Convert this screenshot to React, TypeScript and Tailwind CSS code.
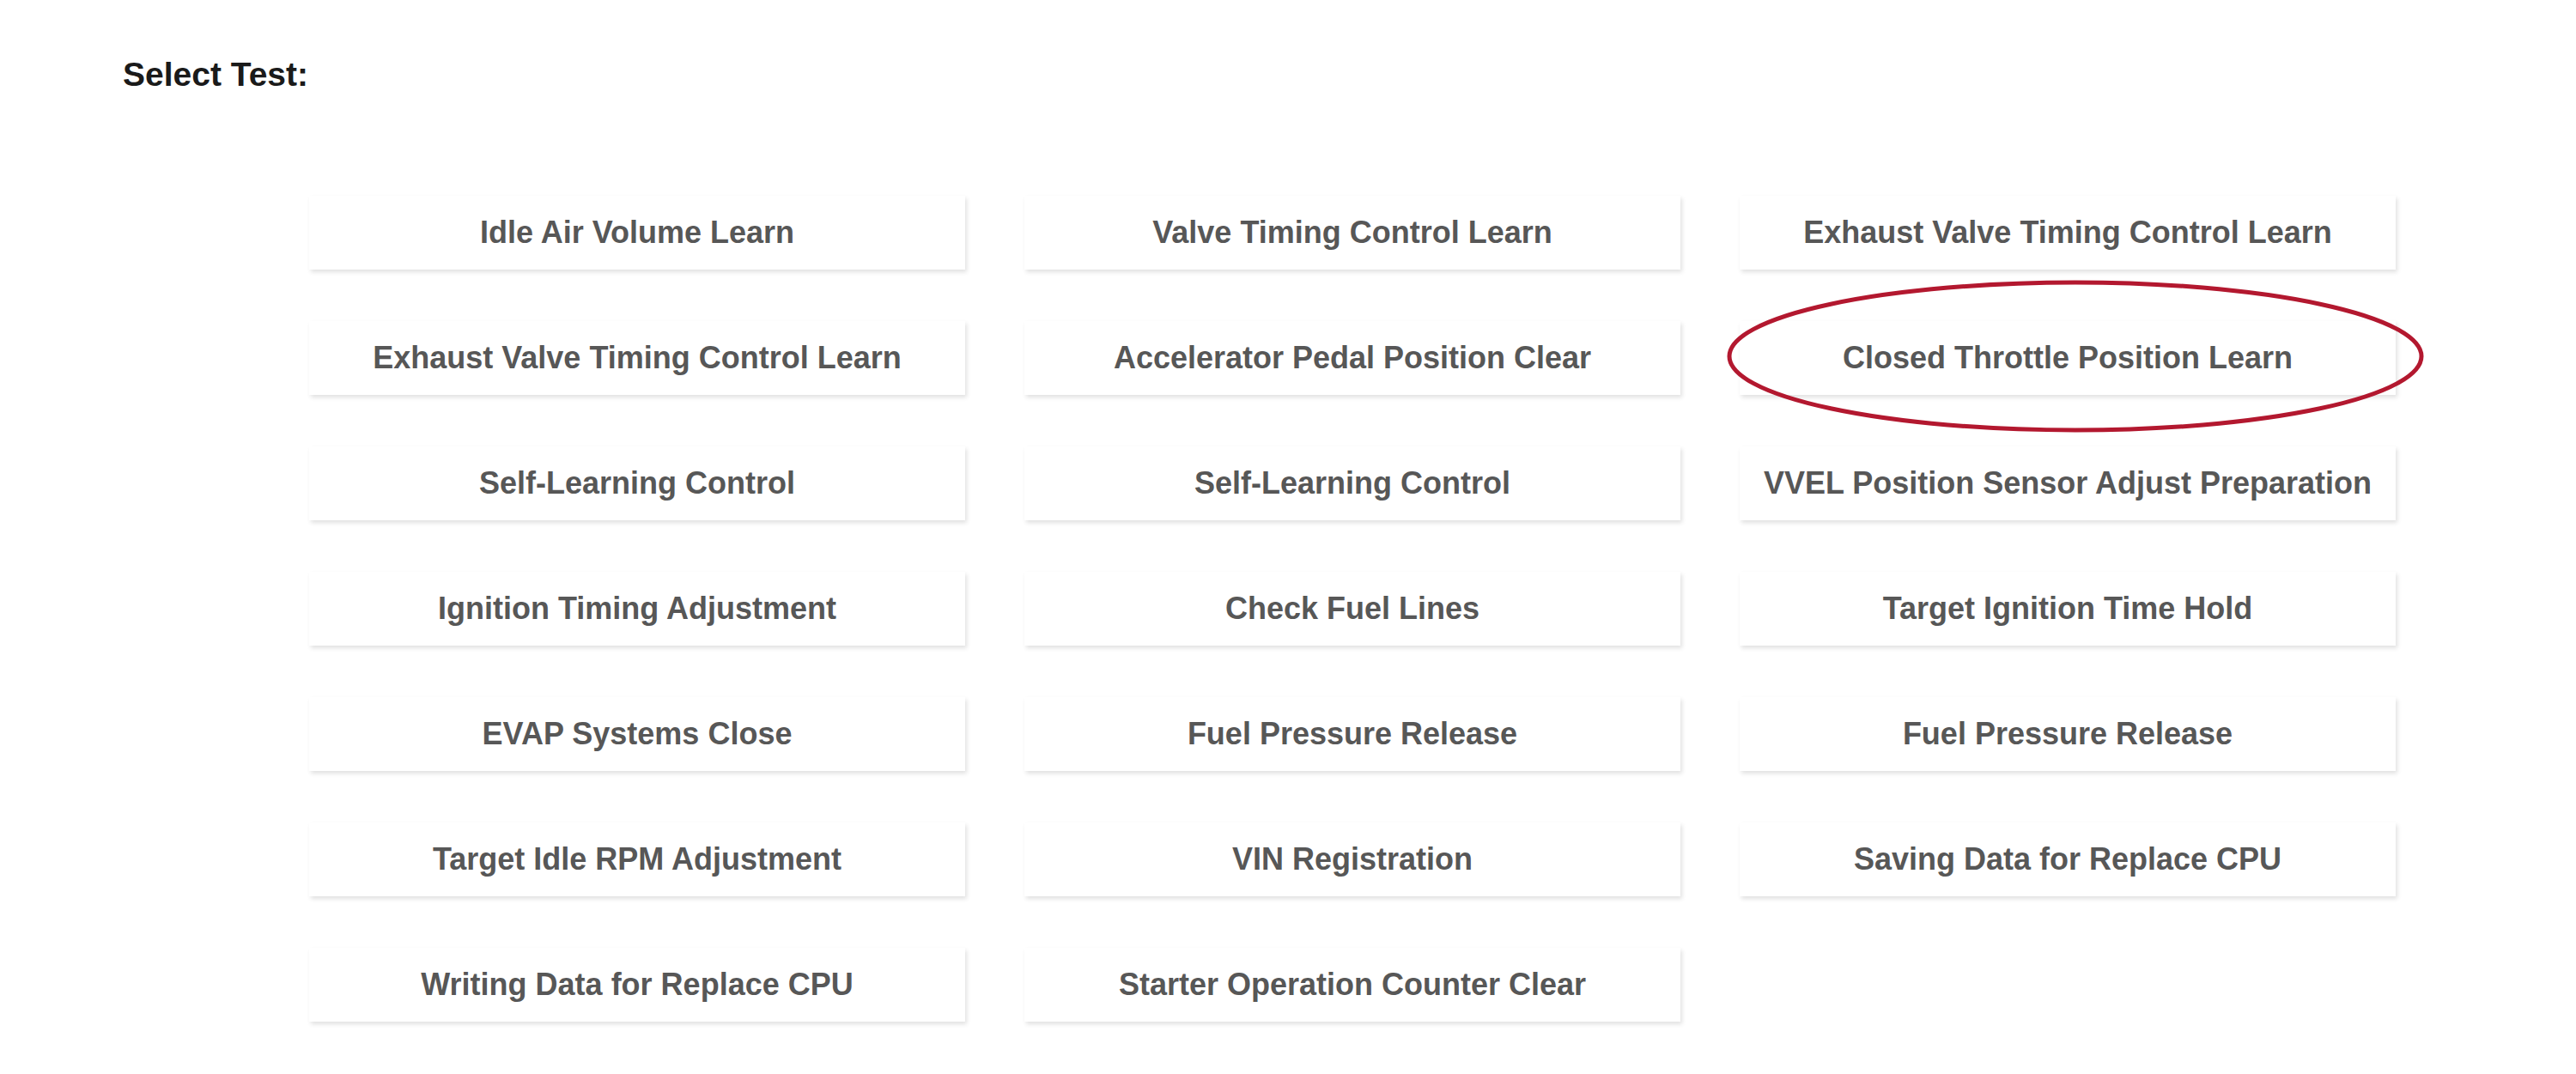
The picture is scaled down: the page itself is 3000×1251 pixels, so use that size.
import React from "react";

const tests: string[] = [
  "Idle Air Volume Learn",
  "Valve Timing Control Learn",
  "Exhaust Valve Timing Control Learn",
  "Exhaust Valve Timing Control Learn",
  "Accelerator Pedal Position Clear",
  "Closed Throttle Position Learn",
  "Self-Learning Control",
  "Self-Learning Control",
  "VVEL Position Sensor Adjust Preparation",
  "Ignition Timing Adjustment",
  "Check Fuel Lines",
  "Target Ignition Time Hold",
  "EVAP Systems Close",
  "Fuel Pressure Release",
  "Fuel Pressure Release",
  "Target Idle RPM Adjustment",
  "VIN Registration",
  "Saving Data for Replace CPU",
  "Writing Data for Replace CPU",
  "Starter Operation Counter Clear",
];

const HIGHLIGHT = 5;

const TestButton = ({ label, marked }: { label: string; marked?: boolean }) => (
  <div className="relative flex h-[86px] items-center justify-center bg-white shadow-[2px_3px_5px_rgba(0,0,0,0.12)]">
    <span className="whitespace-nowrap text-[36px] font-bold text-[#575757]">{label}</span>
    {marked && (
      <svg
        className="pointer-events-none absolute left-[-16px] top-[-49px]"
        width="814"
        height="180"
        viewBox="0 0 814 180"
      >
        <ellipse cx="407" cy="90" rx="403" ry="86" fill="none" stroke="#b3182f" strokeWidth="5" />
      </svg>
    )}
  </div>
);

export default function App() {
  return (
    <div
      className="min-h-[1251px] w-[3000px] bg-white pl-[143px] pt-[67px]"
      style={{ fontFamily: '"Liberation Sans", Arial, sans-serif' }}
    >
      <h1 className="text-[39px] font-bold leading-none text-[#1a1a1a]">Select Test:</h1>
      <div className="ml-[217px] mt-[122px] grid w-[2430px] grid-cols-[764px_764px_764px] gap-x-[69px] gap-y-[60px]">
        {tests.map((t, i) => (
          <TestButton key={i} label={t} marked={i === HIGHLIGHT} />
        ))}
      </div>
    </div>
  );
}
